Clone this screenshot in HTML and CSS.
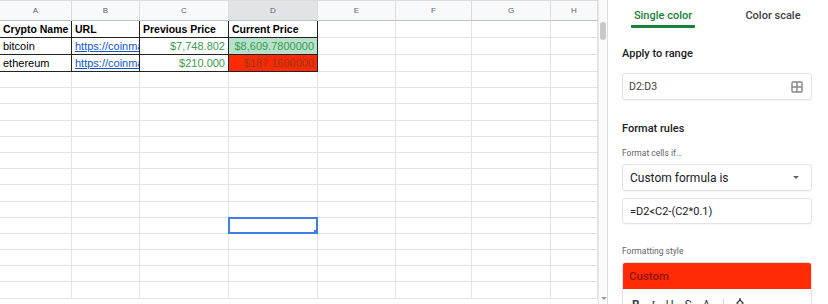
FILE: index.html
```html
<!DOCTYPE html>
<html lang="en">
<head>
<meta charset="UTF-8">
<meta name="viewport" content="width=device-width, initial-scale=1.0">
<title>Conditional format rules</title>
<link rel="stylesheet" href="styles.css">
</head>
<body>

<div class="app">
  <div class="sheet" id="sheet">
    <div class="col-head">A</div>
    <div class="col-head">B</div>
    <div class="col-head">C</div>
    <div class="col-head active">D</div>
    <div class="col-head">E</div>
    <div class="col-head">F</div>
    <div class="col-head">G</div>
    <div class="col-head">H</div>

    <div class="cell dark bold">Crypto Name</div>
    <div class="cell dark bold">URL</div>
    <div class="cell dark bold">Previous Price</div>
    <div class="cell dark bold">Current Price</div>
    <div class="cell"></div>
    <div class="cell"></div>
    <div class="cell"></div>
    <div class="cell"></div>

    <div class="cell dark">bitcoin</div>
    <div class="cell dark"><a class="link" href="#">https://coinmar</a></div>
    <div class="cell dark num">$7,748.802</div>
    <div class="cell dark num up">$8,609.7800000</div>
    <div class="cell"></div>
    <div class="cell"></div>
    <div class="cell"></div>
    <div class="cell"></div>

    <div class="cell dark">ethereum</div>
    <div class="cell dark"><a class="link" href="#">https://coinmar</a></div>
    <div class="cell dark num">$210.000</div>
    <div class="cell dark num down">$187.1600000</div>
    <div class="cell"></div>
    <div class="cell"></div>
    <div class="cell"></div>
    <div class="cell"></div>
  </div>

  <div class="vscroll">
    <div class="thumb"></div>
    <div class="arrow"></div>
  </div>

  <aside class="panel">
    <div class="tabs">
      <div class="tab"><span class="tab-label selected">Single color</span></div>
      <div class="tab"><span class="tab-label">Color scale</span></div>
    </div>

    <div class="section-title first">Apply to range</div>
    <div class="field">
      <span>D2:D3</span>
      <svg class="range-icon" width="12" height="12" viewBox="0 0 12 12">
        <rect x="1" y="1" width="10" height="10" rx="1" fill="none" stroke="#80868b" stroke-width="1.4"/>
        <path d="M6 1v10M1 6h10" stroke="#80868b" stroke-width="1.4"/>
      </svg>
    </div>

    <div class="section-title">Format rules</div>
    <div class="hint">Format cells if…</div>
    <div class="field select">
      <span>Custom formula is</span>
      <span class="caret"></span>
    </div>
    <div class="field formula">=D2&lt;C2-(C2*0.1)</div>

    <div class="hint style-hint">Formatting style</div>
    <div class="style-box">
      <div class="preview">Custom</div>
      <div class="toolbar">
        <span class="tool t-bold">B</span>
        <span class="tool t-italic">I</span>
        <span class="tool t-under">U</span>
        <span class="tool t-strike">S</span>
        <span class="tool t-color">A</span>
        <span class="divider"></span>
        <svg class="tool fill" width="12" height="12" viewBox="0 0 12 12">
          <path d="M3 5l3-3 3 3-3 3z" fill="none" stroke="#3c4043" stroke-width="1.3"/>
          <path d="M6 0v3" stroke="#3c4043" stroke-width="1.3"/>
        </svg>
      </div>
    </div>
  </aside>
</div>

<script>
// fill the rest of the grid with empty rows
const sheet = document.getElementById('sheet');
for (let r = 4; r <= 17; r++) {
  for (let c = 0; c < 8; c++) {
    const cell = document.createElement('div');
    cell.className = 'cell';
    if (r === 13 && c === 3) {
      cell.className = 'cell sel';
    }
    sheet.appendChild(cell);
  }
}
</script>
</body>
</html>
```

FILE: styles.css
```css
body {
  margin: 0;
  padding: 0;
  background: #fff;
  overflow: hidden;
}

.app {
  display: flex;
  width: 828px;
  height: 304px;
  overflow: hidden;
}

/* spreadsheet grid */
.sheet {
  width: 598px;
  flex: none;
  display: grid;
  grid-template-columns: 72px 68px 89px 89px 78px 76px 79px 47px;
  grid-template-rows: 20px 17px 17px 17px repeat(14, 16.2px);
  font-family: "Liberation Sans", Arial, sans-serif;
  font-size: 11px;
  color: #000;
  border-top: 1px solid #dadce0;
  box-sizing: border-box;
  height: 304px;
  align-content: start;
}

.col-head {
  background: #f8f9fa;
  color: #5f6368;
  font-size: 8px;
  text-align: center;
  line-height: 19px;
  border-right: 1px solid #dadce0;
  border-bottom: 1px solid #c0c0c0;
  box-sizing: border-box;
}

.col-head.active {
  background: #e1e3e6;
}

.cell {
  box-sizing: border-box;
  border-right: 1px solid #e2e3e3;
  border-bottom: 1px solid #e2e3e3;
  padding: 0 3px;
  white-space: nowrap;
  overflow: hidden;
  display: flex;
  align-items: center;
  position: relative;
}

.cell.dark {
  border-right-color: #222;
  border-bottom-color: #222;
}

.bold {
  font-weight: bold;
  font-size: 10.5px;
}

.num {
  justify-content: flex-end;
  color: #3a9b4a;
}

.up {
  background: #b7e1cd;
}

.down {
  background: #fd2b05;
  color: #8e3a14;
}

.link {
  color: #1155cc;
  text-decoration: underline;
}

.sel {
  border: 2px solid #3d7fe6;
  margin: -1px 0 0 -1px;
}

.sel::after {
  content: "";
  position: absolute;
  right: -4px;
  bottom: -4px;
  width: 5px;
  height: 5px;
  background: #3d7fe6;
  border: 1px solid #fff;
}

/* scrollbar between grid and sidebar */
.vscroll {
  width: 8px;
  flex: none;
  position: relative;
  background: #fafafa;
  border-left: 1px solid #e8e8e8;
}

.thumb {
  margin: 22px 0 0 1px;
  width: 6px;
  height: 18px;
  border-radius: 3px;
  background: #c8c8c8;
}

.arrow {
  position: absolute;
  left: 2px;
  bottom: 4px;
  border-left: 3px solid transparent;
  border-right: 3px solid transparent;
  border-top: 3px solid #9a9a9a;
}

/* sidebar */
.panel {
  flex: 1;
  border-left: 1px solid #dadce0;
  padding: 0 16px 0 14px;
  font-family: Roboto, "Liberation Sans", Arial, sans-serif;
  color: #202124;
}

.tabs {
  display: flex;
  margin: 0 -16px 0 -14px;
  height: 28px;
}

.tab {
  flex: 1;
  display: flex;
  justify-content: center;
}

.tab-label {
  font-size: 11px;
  font-weight: 500;
  color: #3c4043;
  padding: 9px 3px 0;
  height: 16px;
  border-bottom: 3px solid transparent;
}

.tab-label.selected {
  color: #188038;
  border-bottom-color: #188038;
  border-radius: 1px;
}

.section-title {
  font-size: 11px;
  font-weight: 500;
  line-height: 14px;
  margin-top: 22px;
}

.section-title.first {
  margin-top: 19px;
}

.hint {
  font-size: 8.5px;
  color: #5f6368;
  line-height: 12px;
  margin-top: 11px;
}

.field {
  height: 27px;
  box-sizing: border-box;
  border: 1px solid #e2e3e6;
  border-radius: 3px;
  margin-top: 12px;
  padding: 0 8px 0 6px;
  display: flex;
  align-items: center;
  justify-content: space-between;
  font-size: 10.5px;
  color: #3c4043;
  box-shadow: 0 1px 1px rgba(0, 0, 0, 0.04);
}

.select {
  margin-top: 5px;
  font-size: 12px;
  color: #202124;
  padding-left: 7px;
  padding-right: 12px;
}

.caret {
  border-left: 3px solid transparent;
  border-right: 3px solid transparent;
  border-top: 3px solid #5f6368;
}

.formula {
  margin-top: 7px;
  height: 26px;
  font-size: 11px;
  color: #202124;
  padding-left: 7px;
}

.style-hint {
  margin-top: 21px;
}

.style-box {
  margin-top: 5px;
  border: 1px solid #e2e3e6;
  border-radius: 3px;
  overflow: hidden;
}

.preview {
  height: 26px;
  background: #ff2b06;
  color: #8f1210;
  font-size: 11.5px;
  font-weight: 500;
  line-height: 26px;
  padding-left: 6px;
}

.toolbar {
  display: flex;
  align-items: flex-start;
  height: 30px;
  padding: 9px 0 0 9px;
  box-sizing: border-box;
  font-size: 12px;
  color: #3c4043;
}

.tool {
  margin-right: 11px;
}

.t-bold {
  font-weight: bold;
}

.t-italic {
  font-style: italic;
  font-family: "Liberation Serif", serif;
}

.t-under {
  text-decoration: underline;
}

.t-strike {
  text-decoration: line-through;
}

.divider {
  width: 1px;
  height: 16px;
  background: #dadce0;
  margin: 0 10px 0 2px;
}
```
